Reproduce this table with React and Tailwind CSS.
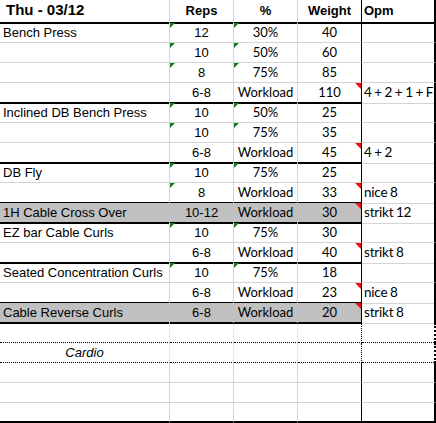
import React from 'react';

const rows = [
    { name: 'Bench Press', reps: '12', pct: '30%', weight: '40', rg: true, pg: true },
    { name: '', reps: '10', pct: '50%', weight: '60', rg: true, pg: true },
    { name: '', reps: '8', pct: '75%', weight: '85', rg: true, pg: true },
    { name: '', reps: '6-8', pct: 'Workload', weight: '110', note: '4 + 2 + 1 + F', end: true },
    { name: 'Inclined DB Bench Press', reps: '10', pct: '50%', weight: '25', rg: true, pg: true },
    { name: '', reps: '10', pct: '75%', weight: '35', rg: true, pg: true },
    { name: '', reps: '6-8', pct: 'Workload', weight: '45', note: '4 + 2', end: true },
    { name: 'DB Fly', reps: '10', pct: '75%', weight: '25', rg: true, pg: true },
    { name: '', reps: '8', pct: 'Workload', weight: '33', note: 'nice 8', rg: true, end: true },
    { name: '1H Cable Cross Over', reps: '10-12', pct: 'Workload', weight: '30', note: 'strikt 12', gray: true, end: true },
    { name: 'EZ bar Cable Curls', reps: '10', pct: '75%', weight: '30', rg: true, pg: true },
    { name: '', reps: '6-8', pct: 'Workload', weight: '40', note: 'strikt 8', end: true },
    { name: 'Seated Concentration Curls', reps: '10', pct: '75%', weight: '18', rg: true, pg: true },
    { name: '', reps: '6-8', pct: 'Workload', weight: '23', note: 'nice 8', end: true },
    { name: 'Cable Reverse Curls', reps: '6-8', pct: 'Workload', weight: '20', note: 'strikt 8', gray: true, end: true },
];

// empty rows at the bottom, the dotted ones frame the Cardio line
const tail = [
    { dotted: true },
    { cardio: true, dotted: true },
    {},
    {},
    { last: true },
];

const GRID = 'grid grid-cols-[170px_64px_64px_64px_74px]';
const ARIAL = "font-['Liberation_Sans',Arial,sans-serif]";
const CALIBRI = "font-['Lato',sans-serif]";

const Green = () => (
    <svg className="absolute left-0 top-0" width="5" height="5">
        <polygon points="0,0 5,0 0,5" fill="#1f7a1f" />
    </svg>
);

const Red = () => (
    <svg className="absolute right-0 top-0" width="6" height="6">
        <polygon points="0,0 6,0 6,6" fill="#ee1111" />
    </svg>
);

const Header = () => (
    <div className={`${GRID} h-[23px] text-black`}>
        <div className={`${ARIAL} border-r border-r-[#d4d4d4] border-b-2 border-b-black pl-[6px] text-[15px] font-bold leading-[20px]`}>
            Thu - 03/12
        </div>
        <div className={`${ARIAL} border-r border-r-[#d4d4d4] border-b-2 border-b-black text-center text-[13px] font-bold leading-[22px]`}>Reps</div>
        <div className={`${ARIAL} border-r border-r-[#d4d4d4] border-b-2 border-b-black text-center text-[13px] font-bold leading-[22px]`}>%</div>
        <div className={`${ARIAL} border-r border-r-black border-b-2 border-b-black text-center text-[13px] font-bold leading-[22px]`}>Weight</div>
        <div className={`${ARIAL} border-r-2 border-r-black border-b-2 border-b-black pl-[2px] text-[13px] font-bold leading-[22px]`}>Opm</div>
    </div>
);

const SetRow = ({ row }) => {
    const bottom = row.end ? 'border-b-2 border-b-black' : 'border-b border-b-[#d4d4d4]';
    const fill = row.gray ? 'bg-[#c0c0c0] border-r-transparent' : 'border-r-[#d4d4d4]';
    return (
        <div className={`${GRID} h-5 text-black`}>
            <div className={`${ARIAL} border-r ${fill} ${bottom} pl-[3px] text-[13px] leading-[19px] whitespace-nowrap`}>{row.name}</div>
            <div className={`${ARIAL} relative border-r ${fill} ${bottom} text-center text-[13px] leading-[19px]`}>
                {row.rg && <Green />}
                {row.reps}
            </div>
            <div className={`${CALIBRI} relative border-r ${fill} ${bottom} text-center text-[13px] leading-[19px]`}>
                {row.pg && <Green />}
                {row.pct}
            </div>
            <div className={`${CALIBRI} relative border-r border-r-black ${bottom} ${row.gray ? 'bg-[#c0c0c0]' : ''} text-center text-[13px] leading-[19px]`}>
                {row.note && <Red />}
                {row.weight}
            </div>
            <div className={`${CALIBRI} overflow-hidden border-r-2 border-r-black border-b border-b-[#d4d4d4] pl-[2px] text-[13.5px] tracking-[-0.2px] [word-spacing:-0.6px] leading-[19px] whitespace-nowrap`}>
                {row.note}
            </div>
        </div>
    );
};

const TailRow = ({ row }) => {
    let bottom = 'border-b border-b-[#d4d4d4]';
    if (row.dotted) bottom = 'border-b border-dotted border-b-black';
    if (row.last) bottom = 'border-b-2 border-b-black';
    return (
        <div className={`${GRID} h-5 text-black`}>
            <div className={`${ARIAL} border-r border-r-[#d4d4d4] ${bottom} text-center text-[13px] italic leading-[19px]`}>
                {row.cardio ? 'Cardio' : ''}
            </div>
            <div className={`border-r border-r-[#d4d4d4] ${bottom}`} />
            <div className={`border-r border-r-[#d4d4d4] ${bottom}`} />
            <div className={`border-r border-r-black ${bottom}`} />
            <div className={`border-r-2 border-r-black ${bottom}`} />
        </div>
    );
};

const App = () => {
    return (
        <div className="h-[423px] w-[436px] overflow-hidden bg-white">
            <Header />
            {rows.map((row, i) => (
                <SetRow key={i} row={row} />
            ))}
            {tail.map((row, i) => (
                <TailRow key={i} row={row} />
            ))}
        </div>
    );
};

export default App;
